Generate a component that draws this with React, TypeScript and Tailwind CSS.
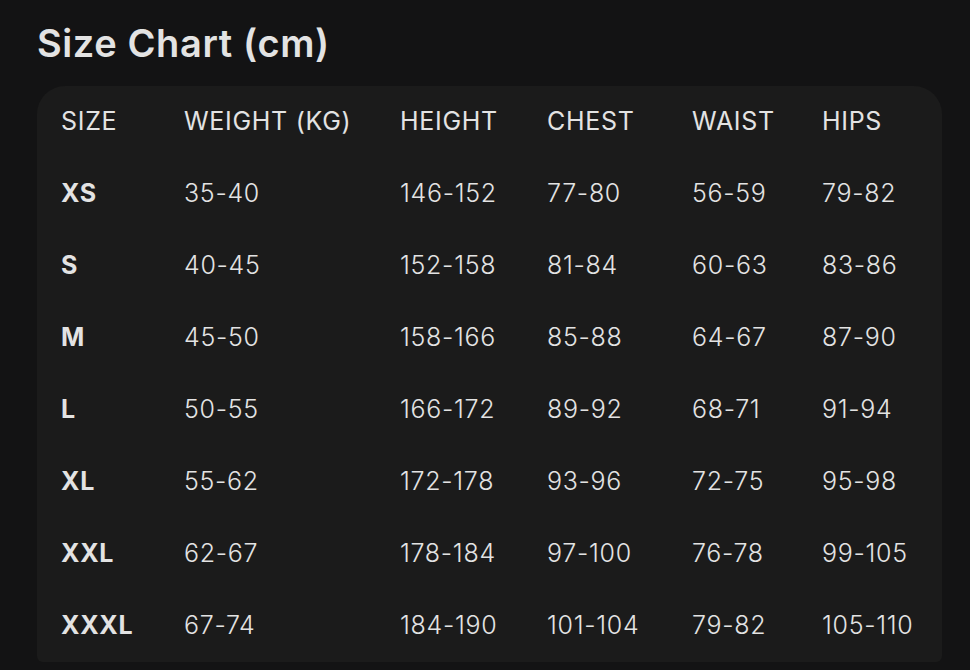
const columns = ["SIZE", "WEIGHT (KG)", "HEIGHT", "CHEST", "WAIST", "HIPS"];

const rows = [
  ["XS", "35-40", "146-152", "77-80", "56-59", "79-82"],
  ["S", "40-45", "152-158", "81-84", "60-63", "83-86"],
  ["M", "45-50", "158-166", "85-88", "64-67", "87-90"],
  ["L", "50-55", "166-172", "89-92", "68-71", "91-94"],
  ["XL", "55-62", "172-178", "93-96", "72-75", "95-98"],
  ["XXL", "62-67", "178-184", "97-100", "76-78", "99-105"],
  ["XXXL", "67-74", "184-190", "101-104", "79-82", "105-110"],
];

export default function App() {
  return (
    <div className="w-[970px] h-[670px] overflow-hidden bg-[#131314] text-[#e3e3e3] font-['Inter',sans-serif]">
      <div className="pl-[37px] pr-[28px]">
        <h1 className="h-[86px] pt-[21px] text-[38px] leading-[44px] font-semibold tracking-[0.6px]">
          Size Chart (cm)
        </h1>

        <div className="bg-[#1b1b1b] rounded-t-[28px] rounded-b-[6px] px-6">
          <div className="grid grid-cols-[123px_216px_147px_145px_130px_1fr] h-[72px] items-center text-[25px] tracking-[0.7px] font-normal">
            {columns.map((c) => (
              <span key={c}>{c}</span>
            ))}
          </div>
          {rows.map((row) => (
            <div
              key={row[0]}
              className="grid grid-cols-[123px_216px_147px_145px_130px_1fr] h-[72px] items-center text-[25px] tracking-[0.7px]"
            >
              {row.map((cell, i) => (
                <span key={i} className={i === 0 ? "font-bold" : "font-light"}>
                  {cell}
                </span>
              ))}
            </div>
          ))}
        </div>
      </div>
    </div>
  );
}
